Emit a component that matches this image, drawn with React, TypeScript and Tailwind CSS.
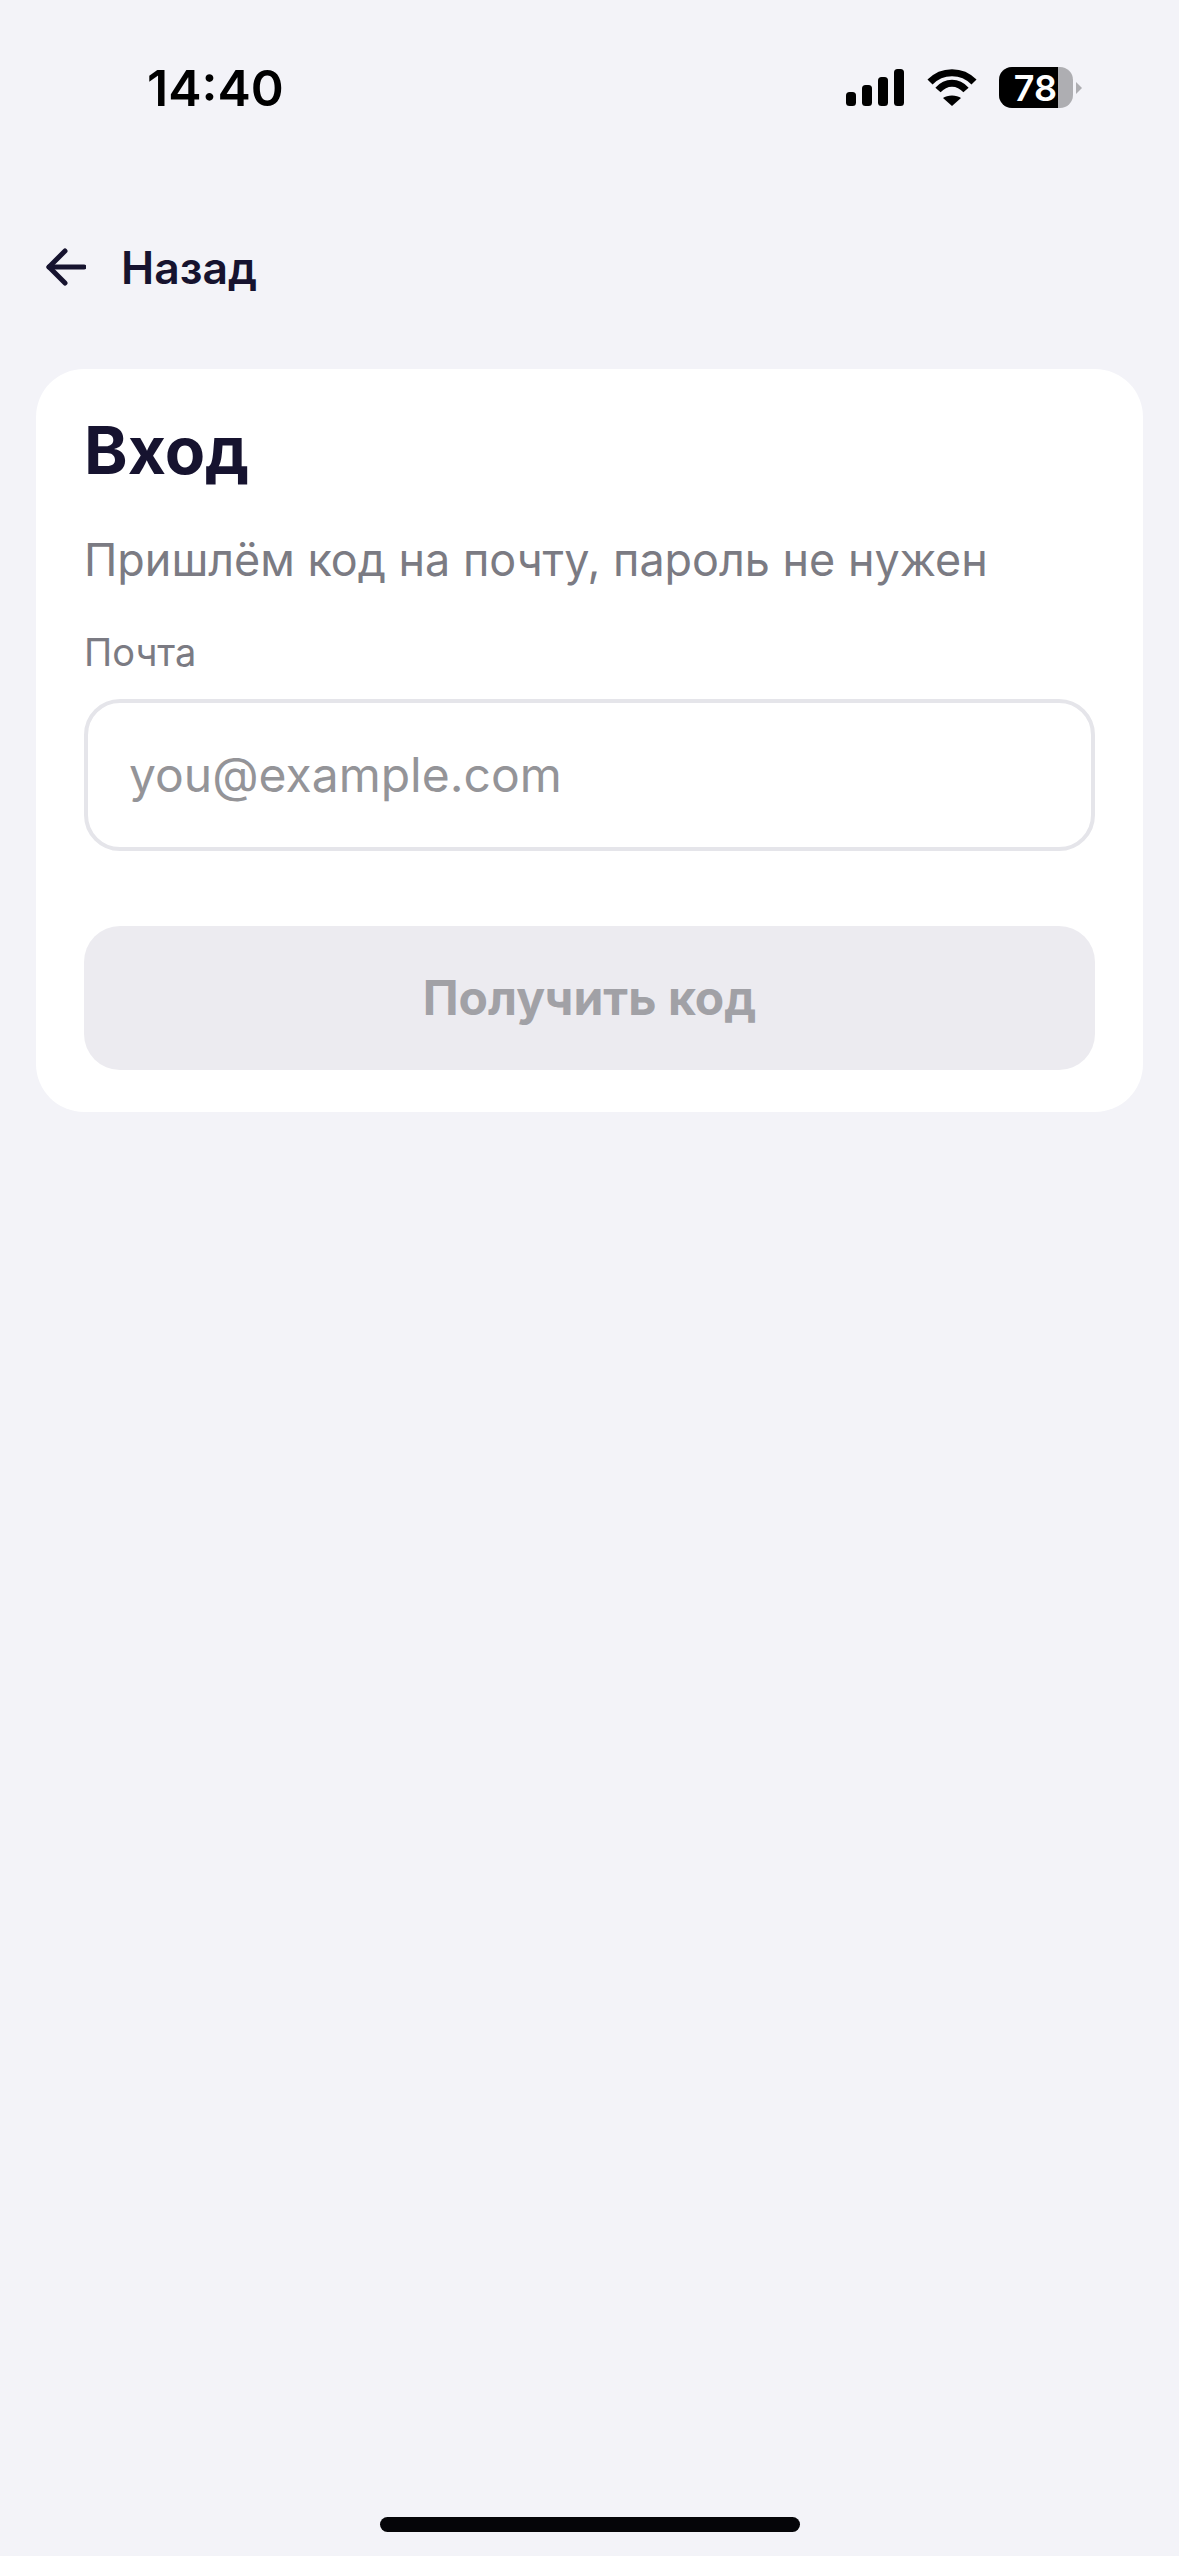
export default function App() {
  return (
    <div className="relative min-h-[2556px] w-[1179px] bg-[#f3f3f8] font-['Inter',sans-serif]">
      <div className="flex h-[175px] items-start justify-between pl-[147px] pr-[97px] pt-[57px]">
        <span className="text-[50px] leading-[62px] font-semibold text-black">14:40</span>
        <div className="flex h-[51px] items-center pt-[10px]">
          <svg width="58" height="37" viewBox="0 0 58 37" fill="black">
            <rect x="0" y="23" width="10" height="14" rx="3.5" />
            <rect x="16" y="16" width="10" height="21" rx="3.5" />
            <rect x="32" y="8" width="10" height="29" rx="3.5" />
            <rect x="48" y="0" width="10" height="37" rx="3.5" />
          </svg>
          <svg width="50" height="37" viewBox="0 0 50 37" fill="none" stroke="black" strokeWidth="7" className="ml-[23px]">
            <path d="M3 13 C 15 0.5, 35 0.5, 47 13" />
            <path d="M11 21 C 19 12, 31 12, 39 21" />
            <path d="M25 37 L16 29 C 20 25.5, 30 25.5, 34 29 Z" fill="black" stroke="none" />
          </svg>
          <div className="ml-[22px] flex items-center">
            <div className="flex h-[41px] w-[74px] overflow-hidden rounded-[13px] bg-[#aeaeb2]">
              <div className="flex h-full w-[59px] items-center justify-end bg-black pr-[1px]">
                <span className="text-[36px] leading-none font-semibold text-white">78</span>
              </div>
            </div>
            <svg width="6" height="12" viewBox="0 0 6 12" className="ml-[3px]" fill="#aeaeb2">
              <path d="M0 0 L6 6 L0 12 Z" />
            </svg>
          </div>
        </div>
      </div>
      <div className="flex h-[194px] items-start gap-[35px] pl-[46px] pt-[73px]">
        <svg width="40" height="38" viewBox="0 0 40 38" fill="none" stroke="#16132f" strokeWidth="5" strokeLinecap="round" strokeLinejoin="round">
          <path d="M38 19 H3" />
          <path d="M19 3 L3 19 L19 35" />
        </svg>
        <span className="text-[44.5px] leading-[40px] font-semibold text-[#16132f]">Назад</span>
      </div>
      <div className="mx-[36px] flex flex-col rounded-[48px] bg-white px-[48px] pb-[42px]">
        <h1 className="mt-[41px] text-[66px] leading-[80px] font-bold text-[#16132f]">Вход</h1>
        <p className="mt-[40px] text-[44.9px] leading-[60px] text-[#7b7b83]">Пришлём код на почту, пароль не нужен</p>
        <label className="mt-[38px] text-[38px] leading-[48px] text-[#7b7b83]">Почта</label>
        <div className="mt-[23px] flex h-[152px] items-center rounded-[36px] border-[4px] border-[#e5e5ea] bg-white pl-[41px]">
          <span className="text-[48px] leading-none text-[#949498]">you@example.com</span>
        </div>
        <button className="mt-[75px] flex h-[144px] items-center justify-center rounded-[36px] bg-[#ecebf0] text-[48px] font-bold text-[#a1a1a6]">Получить код</button>
      </div>
      <div className="absolute bottom-[24px] left-[380px] h-[15px] w-[420px] rounded-full bg-[#050508]" />
    </div>
  );
}
